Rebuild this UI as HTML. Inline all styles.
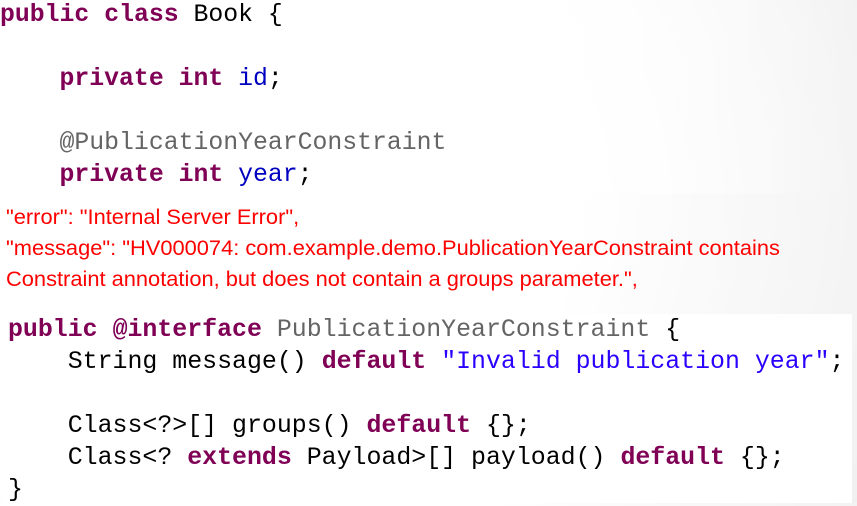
<!DOCTYPE html>
<html><head><style>
html,body{margin:0;padding:0}
body{width:857px;height:503px;overflow:hidden;position:relative;background:radial-gradient(ellipse 900px 700px at 20% 40%,#fff 45%,#ececec 100%);}
.code{font-family:"Liberation Mono",monospace;white-space:pre;position:absolute;line-height:32px;color:#000}
.k{color:#7f0055;font-weight:bold}
.f{color:#0000c0}
.a{color:#646464}
.s{color:#2a00ff}
#top{left:0;top:0;width:857px;height:193px;background:linear-gradient(90deg,#fff 60%,rgba(255,255,255,0) 100%);}
#t{left:0;top:-1px;font-size:24.8px}
#err{position:absolute;left:6px;top:202px;color:#ff0000;font-family:"Liberation Sans",sans-serif;font-size:21px;line-height:31px;white-space:pre;transform:scaleX(1.04);transform-origin:left top}
#box{position:absolute;left:4px;top:314px;width:848px;height:189px;background:#fff}
#b{left:8px;top:314px;font-size:24.9px;}
</style></head><body>
<div id="top" style="position:absolute"></div>
<div class="code" id="t"><span class="k">public</span> <span class="k">class</span> Book {

    <span class="k">private</span> <span class="k">int</span> <span class="f">id</span>;

    <span class="a">@PublicationYearConstraint</span>
    <span class="k">private</span> <span class="k">int</span> <span class="f">year</span>;</div>
<div id="err">"error": "Internal Server Error",
"message": "HV000074: com.example.demo.PublicationYearConstraint contains
Constraint annotation, but does not contain a groups parameter.",</div>
<div id="box"></div>
<div class="code" id="b"><span class="k">public</span> <span class="k">@interface</span> <span class="a">PublicationYearConstraint</span> {
    String message() <span class="k">default</span> <span class="s">"Invalid publication year"</span>;

    Class&lt;?&gt;[] groups() <span class="k">default</span> {};
    Class&lt;? <span class="k">extends</span> Payload&gt;[] payload() <span class="k">default</span> {};
}</div>
</body></html>
